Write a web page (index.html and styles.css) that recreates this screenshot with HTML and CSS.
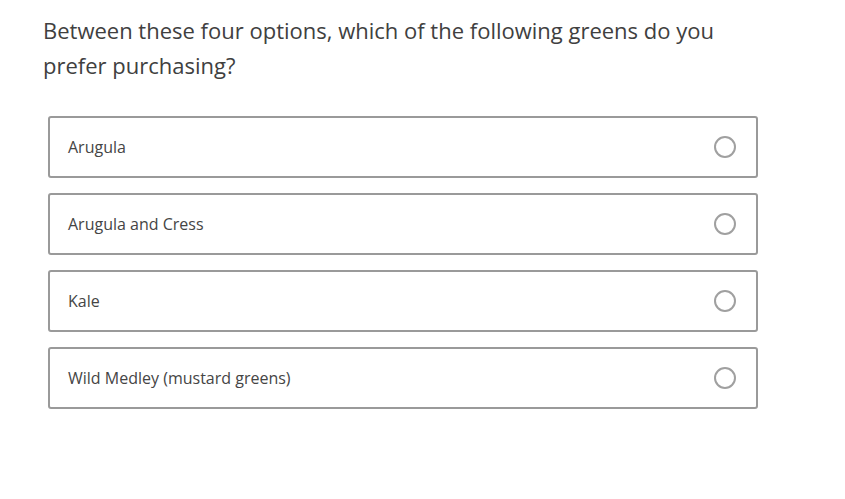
FILE: index.html
```html
<!DOCTYPE html>
<html>
<head>
<meta charset="utf-8">
<link rel="stylesheet" href="styles.css">
</head>
<body>
<div class="question">
  <h1 class="title">Between these four options, which of the following greens do you prefer purchasing?</h1>
  <div class="options">
    <label class="option"><span class="label">Arugula</span><span class="radio"></span></label>
    <label class="option"><span class="label">Arugula and Cress</span><span class="radio"></span></label>
    <label class="option"><span class="label">Kale</span><span class="radio"></span></label>
    <label class="option"><span class="label">Wild Medley (mustard greens)</span><span class="radio"></span></label>
  </div>
</div>
</body>
</html>
```
FILE: styles.css
```css
html, body { margin: 0; padding: 0; background: #fff; }
body { font-family: "Open Sans", sans-serif; color: #404040; }
.question { padding: 13px 0 0 43px; width: 715px; }
.title { margin: 0; font-size: 22px; font-weight: 400; line-height: 35px; color: #404040; width: 700px; }
.options { display: flex; flex-direction: column; gap: 15px; margin-top: 33px; margin-left: 5px; width: 710px; }
.option { display: flex; align-items: center; justify-content: space-between; height: 62px; box-sizing: border-box; border: 2px solid #9a9a9a; border-radius: 3px; padding: 0 20px 0 18px; }
.label { font-size: 16px; line-height: 22px; color: #454545; }
.radio { width: 22px; height: 22px; box-sizing: border-box; border: 2px solid #a0a0a0; border-radius: 50%; }
```
